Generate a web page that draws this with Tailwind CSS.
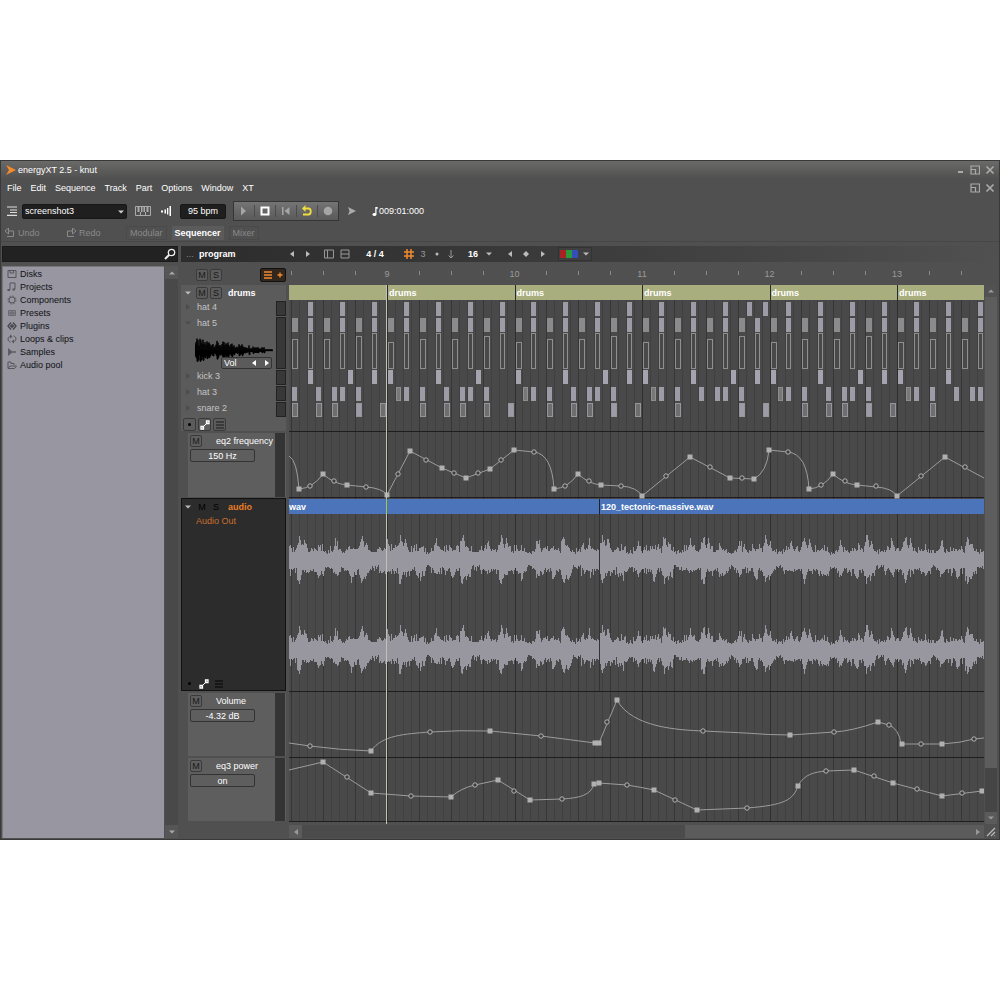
<!DOCTYPE html>
<html lang="en">
<head>
    <meta charset="UTF-8">
    <meta name="viewport" content="width=device-width, initial-scale=1.0">
    <title>energyXT 2.5 - knut</title>
    <script src="https://cdn.jsdelivr.net/npm/@tailwindcss/browser@4"></script>
</head>
<body class="bg-white min-h-screen flex items-center font-['Liberation_Sans',Arial,sans-serif] text-[9px] leading-3 text-white">
    <!-- Shared icons -->
    <svg class="hidden">
        <symbol id="left" viewBox="0 0 8 8"><path d="M6 1v6L2 4z" fill="currentColor"/></symbol>
        <symbol id="right" viewBox="0 0 8 8"><path d="M2 1v6l4-3z" fill="currentColor"/></symbol>
        <symbol id="down" viewBox="0 0 8 8"><path d="M1 2.500h6L4 5.500z" fill="currentColor"/></symbol>
        <symbol id="up" viewBox="0 0 8 8"><path d="M1 5.500h6L4 2.500z" fill="currentColor"/></symbol>
        <symbol id="close" viewBox="0 0 10 10"><path d="M1.500 1.500l7 7m0-7l-7 7" stroke="currentColor" stroke-width="1.700"/></symbol>
        <symbol id="restore" viewBox="0 0 10 10"><path d="M1 4V1h8.500v8H5M1 4.500h4.500V9H1z" fill="none" stroke="currentColor" stroke-width="1.200"/></symbol>
        <symbol id="nodes" viewBox="0 0 10 10"><path d="M2.500 7.500l5-5" stroke="currentColor"/><path d="M1 6.500h2.500V9H1zM6.500 1H9v2.500H6.500z" fill="none" stroke="currentColor" stroke-width="1.300"/></symbol>
        <symbol id="list" viewBox="0 0 10 10"><path d="M1 2h8M1 5h8M1 8h8" stroke="currentColor" stroke-width="1.200"/></symbol>
    </svg>

    <main class="w-full bg-[#505050] border border-[#393939]">
        <!-- Title bar -->
        <header class="h-[18px] flex items-center px-1 bg-gradient-to-b from-[#6a6a68] to-[#505050]">
            <svg class="w-3 h-3 text-[#f58a2c]" viewBox="0 0 12 12"><path d="M1 1l10 5-10 5 3-5z" fill="currentColor"/></svg>
            <h1 class="ml-px">energyXT 2.5 - knut</h1>
            <div class="ml-auto flex items-center gap-[5px] text-[#aaa]">
                <button aria-label="Minimize" class="w-[5px] h-[2px] mt-1 bg-[#aaa]"></button>
                <button aria-label="Restore" class="ml-[2px]"><svg class="w-[10px] h-[10px]"><use href="#restore"/></svg></button>
                <button aria-label="Close"><svg class="w-[10px] h-[10px]"><use href="#close"/></svg></button>
            </div>
        </header>

        <!-- Menu -->
        <nav class="h-[18px] flex items-center px-[6px] gap-[9px]">
            <button>File</button>
            <button>Edit</button>
            <button>Sequence</button>
            <button>Track</button>
            <button>Part</button>
            <button>Options</button>
            <button>Window</button>
            <button>XT</button>
            <div class="ml-auto -mr-[2px] flex items-center gap-[5px] text-[#aaa]">
                <button aria-label="Restore sequence"><svg class="w-[10px] h-[10px]"><use href="#restore"/></svg></button>
                <button aria-label="Close sequence"><svg class="w-[10px] h-[10px]"><use href="#close"/></svg></button>
            </div>
        </nav>

        <!-- Toolbar -->
        <div class="h-7 flex items-center px-[6px]">
            <button aria-label="Browser"><svg class="w-[10px] h-[10px] text-[#ddd]" viewBox="0 0 10 10"><path d="M0 1h10M3 4h7M3 6.500h7M0 9.300h10" stroke="currentColor" stroke-width="1.200"/></svg></button>
            <div class="relative ml-[5px]">
                <select aria-label="Sequence" class="appearance-none block w-[105px] h-[15px] pl-[2px] bg-[#1f1f1f] border border-[#171717] rounded-xs text-white">
                    <option>screenshot3</option>
                </select>
                <svg class="absolute right-[2px] top-1 w-2 h-2 text-[#ccc] pointer-events-none"><use href="#down"/></svg>
            </div>
            <button aria-label="Keyboard" class="ml-2"><svg class="w-4 h-3 text-[#aaa]" viewBox="0 0 16 12"><path d="M.5 1.500h15v9H.5zM5.500 7v4M10.500 7v4" fill="none" stroke="currentColor"/><path d="M2.500 2h2v5h-2zM6 2h1.500v5H6zM8.500 2H10v5H8.500zM11.500 2h2v5h-2z" fill="currentColor"/></svg></button>
            <button aria-label="Level" class="ml-[10px]"><svg class="w-[10px] h-[10px] text-white" viewBox="0 0 10 10"><path d="M0 4.500h2v2H0zM3.500 3.500h1.500v4H3.500zM6 2h1.300v6.500H6zM8.500 0h1.500v10H8.500z" fill="currentColor"/></svg></button>
            <input aria-label="Tempo" value="95 bpm" class="ml-[9px] w-[46px] h-[15px] bg-[#1f1f1f] border border-[#171717] rounded-xs text-center">
            <div class="ml-[7px] w-[106px] h-5 flex items-center border border-[#353535] bg-gradient-to-b from-[#747474] to-[#5a5a5a] text-[#a5a5a5] divide-x divide-[#4b4b4b]">
                <button aria-label="Play" class="flex-1 flex justify-center"><svg class="w-3 h-3" viewBox="0 0 12 12"><path d="M3 1.500l5 4.500-5 4.500z" fill="currentColor"/></svg></button>
                <button aria-label="Stop" class="flex-1 flex justify-center text-white"><svg class="w-3 h-3" viewBox="0 0 12 12"><path d="M2.500 2.500h7v7h-7z" fill="none" stroke="currentColor" stroke-width="2"/></svg></button>
                <button aria-label="Rewind" class="flex-1 flex justify-center"><svg class="w-3 h-3" viewBox="0 0 12 12"><path d="M2 2h1.500v8H2zM9.500 2v8L4.500 6z" fill="currentColor"/></svg></button>
                <button aria-label="Loop" class="flex-1 flex justify-center text-[#f0dc3c]"><svg class="w-3 h-3" viewBox="0 0 12 12"><path d="M4.500 0v7L1 3.500z" fill="currentColor"/><path d="M4 3.500h3.500c3 0 3 6 0 6H2" fill="none" stroke="currentColor" stroke-width="1.800"/></svg></button>
                <button aria-label="Record" class="flex-1 flex justify-center"><svg class="w-3 h-3" viewBox="0 0 12 12"><circle cx="6" cy="6" r="4.300" fill="currentColor"/></svg></button>
            </div>
            <button aria-label="Follow" class="ml-[9px]"><svg class="w-2 h-2 text-[#aaa]" viewBox="0 0 8 8"><path d="M0 0l8 4-8 4 1.500-4z" fill="currentColor"/></svg></button>
            <svg class="ml-4 w-[6px] h-[9px]" viewBox="0 0 6 9"><path d="M3.300 0h2.400v1.700H4.500V7.500a2 1.500 0 1 1-1.200-1.400z" fill="currentColor"/></svg>
            <output class="ml-px">009:01:000</output>
        </div>

        <!-- Undo and views -->
        <div class="h-[17px] flex items-center px-1 text-[#8a8a8a] border-b border-[#474747]">
            <button class="flex items-center gap-[3px] w-[61px]"><svg class="w-[10px] h-[10px]" viewBox="0 0 10 10"><path d="M3.500 0v6L0 3zM3 3h5.500v5.500H2" fill="none" stroke="currentColor"/></svg>Undo</button>
            <button class="flex items-center gap-[3px] w-[60px]"><svg class="w-[10px] h-[10px]" viewBox="0 0 10 10"><path d="M6.500 0v6L10 3zM7 3H1.500v5.500H8" fill="none" stroke="currentColor"/></svg>Redo</button>
            <button class="h-[14px] px-[3px] border border-[#4a4a4a]">Modular</button>
            <button class="h-[14px] ml-[5px] px-[3px] bg-[#5b5b5b] font-bold text-white">Sequencer</button>
            <button class="h-[14px] ml-[5px] px-[3px] border border-[#4a4a4a]">Mixer</button>
        </div>

        <div class="flex gap-[3px] pl-px pr-[2px] pt-1 pb-px">
            <!-- Browser -->
            <aside class="w-[176px] shrink-0 flex flex-col">
                <div class="h-4 flex items-center bg-[#222] border border-[#1b1b1b]">
                    <input aria-label="Search" class="flex-1 min-w-0 px-1 bg-transparent outline-none">
                    <svg class="w-3 h-3 mr-px text-[#eee]" viewBox="0 0 12 12"><circle cx="7.500" cy="4.500" r="3.200" fill="none" stroke="currentColor" stroke-width="1.300"/><path d="M5 7L1 11" stroke="currentColor" stroke-width="2"/></svg>
                </div>
                <div class="flex flex-1 mt-1">
                    <ul class="flex-1 bg-[#9796a1] border-t border-l border-[#777] pl-1 text-[#101014]">
                        <li class="h-[13px] flex items-center gap-[3px]"><svg class="w-[10px] h-[10px]" viewBox="0 0 10 10"><path d="M1 1.500h8v7H1zM3 1.500v2.500h3.500V1.500" fill="none" stroke="#55555c"/></svg>Disks</li>
                        <li class="h-[13px] flex items-center gap-[3px]"><svg class="w-[10px] h-[10px]" viewBox="0 0 10 10"><path d="M3 7.500V1h5v6" fill="none" stroke="#55555c"/><path d="M.5 7h2.500v2H.5zM5.500 6.500H8v2H5.500z" fill="#55555c"/></svg>Projects</li>
                        <li class="h-[13px] flex items-center gap-[3px]"><svg class="w-[10px] h-[10px]" viewBox="0 0 10 10"><circle cx="5" cy="5" r="3" fill="none" stroke="#55555c"/><circle cx="5" cy="5" r="4" fill="none" stroke="#55555c" stroke-dasharray="1.500 1.640"/></svg>Components</li>
                        <li class="h-[13px] flex items-center gap-[3px]"><svg class="w-[10px] h-[10px]" viewBox="0 0 10 10"><path d="M1.500 2.500h7v5h-7zM1.500 4.200h7M1.500 5.800h7M4 2.500v5M6 2.500v5" fill="none" stroke="#6a6a72"/></svg>Presets</li>
                        <li class="h-[13px] flex items-center gap-[3px]"><svg class="w-[10px] h-[10px]" viewBox="0 0 10 10"><path d="M4 1.500L1 5l3 3.500M6 1.500L9 5 6 8.500M3 5h4M5 3v4" fill="none" stroke="#44444a" stroke-width="1.300"/></svg>Plugins</li>
                        <li class="h-[13px] flex items-center gap-[3px]"><svg class="w-[10px] h-[10px]" viewBox="0 0 10 10"><path d="M3.500 8C0 7.500.5 2.500 3.500 2.500M6.500 2c3.500.5 3 5.500 0 5.500" fill="none" stroke="#55555c"/><path d="M3 .5L5.500 2.500 3 4.500zM7 5.500L4.500 7.500 7 9.500z" fill="#55555c"/></svg>Loops &amp; clips</li>
                        <li class="h-[13px] flex items-center gap-[3px]"><svg class="w-[10px] h-[10px]" viewBox="0 0 10 10"><path d="M1 1l4 3.300h4v1.400H5L1 9z" fill="#5c5c64"/></svg>Samples</li>
                        <li class="h-[13px] flex items-center gap-[3px]"><svg class="w-[10px] h-[10px]" viewBox="0 0 10 10"><path d="M1 8V2h3v1.500h3V5M1 8.500h6.500L9.500 6H3z" fill="none" stroke="#55555c"/></svg>Audio pool</li>
                    </ul>
                    <div class="w-[13px] ml-px bg-[#494949] flex flex-col justify-between text-[#aaa]">
                        <button aria-label="Scroll up" class="h-[13px] flex items-center justify-center bg-[#565656]"><svg class="w-2 h-2"><use href="#up"/></svg></button>
                        <button aria-label="Scroll down" class="h-[13px] flex items-center justify-center bg-[#565656]"><svg class="w-2 h-2"><use href="#down"/></svg></button>
                    </div>
                </div>
            </aside>

            <section class="flex-1 min-w-0 flex flex-col">
                <!-- Sequencer options -->
                <div class="h-4 mb-[2px] flex items-center bg-gradient-to-r from-[#2c2c2c] via-[#3c3c3c] to-[#505050] text-[#bbb] overflow-hidden">
                    <button class="w-[18px] text-[#888]">...</button>
                    <button class="w-[85px] text-left text-white font-bold">program</button>
                    <button aria-label="Previous pattern" class="w-4 flex justify-center"><svg class="w-2 h-2"><use href="#left"/></svg></button>
                    <button aria-label="Next pattern" class="w-4 flex justify-center"><svg class="w-2 h-2"><use href="#right"/></svg></button>
                    <button aria-label="Split left" class="w-4 ml-[5px] flex justify-center"><svg class="w-[10px] h-[10px] text-[#999]" viewBox="0 0 10 10"><path d="M.5 1h9v8h-9zM3.500 1v8" fill="none" stroke="currentColor"/></svg></button>
                    <button aria-label="Split top" class="w-4 flex justify-center"><svg class="w-[10px] h-[10px] text-[#999]" viewBox="0 0 10 10"><path d="M1 1h8v8H1zM1 5h8" fill="none" stroke="currentColor"/></svg></button>
                    <button class="w-12 -ml-[2px] mr-[2px] text-white font-bold">4 / 4</button>
                    <button aria-label="Grid" class="w-4 flex justify-center"><svg class="w-[10px] h-[10px] text-[#f08a30]" viewBox="0 0 10 10"><path d="M3 0v10M7 0v10M0 3h10M0 7h10" stroke="currentColor" stroke-width="1.500"/></svg></button>
                    <button class="w-3 text-[#999]">3</button>
                    <button aria-label="Dotted" class="w-4 flex justify-center"><svg class="w-1 h-1" viewBox="0 0 4 4"><circle cx="2" cy="2" r="1.500" fill="currentColor"/></svg></button>
                    <button aria-label="Snap" class="w-3 flex justify-center"><svg class="w-2 h-[10px] text-[#999]" viewBox="0 0 8 10"><path d="M4 1v8M1.500 6.500L4 9l2.500-2.500" fill="none" stroke="currentColor"/></svg></button>
                    <button class="w-6 ml-1 text-white font-bold">16</button>
                    <button aria-label="Grid size" class="w-2"><svg class="w-2 h-2"><use href="#down"/></svg></button>
                    <button aria-label="Previous marker" class="w-4 ml-[9px] flex justify-center"><svg class="w-2 h-2"><use href="#left"/></svg></button>
                    <button aria-label="Marker" class="w-4 flex justify-center"><svg class="w-2 h-2" viewBox="0 0 8 8"><path d="M4 1l3 3-3 3-3-3z" fill="currentColor"/></svg></button>
                    <button aria-label="Next marker" class="w-4 ml-px flex justify-center"><svg class="w-2 h-2"><use href="#right"/></svg></button>
                    <button aria-label="Colours" class="ml-[7px] w-[34px] h-[14px] px-px flex items-center border border-[#333] bg-[#3f3f3f]">
                        <span class="w-[6px] h-2 bg-[#a82222]"></span><span class="w-[6px] h-2 bg-[#2a9a3a]"></span><span class="w-[6px] h-2 bg-[#3350b8]"></span>
                        <svg class="w-2 h-2 ml-1"><use href="#down"/></svg>
                    </button>
                </div>

                <div class="flex flex-1">
                    <!-- Track headers -->
                    <div class="w-[105px] shrink-0 flex flex-col">
                        <div class="h-[21px] flex items-center pl-[15px] gap-[2px] text-[#1a1a1a]">
                            <button class="w-3 h-3 leading-[10px] border border-[#3a3a3a] rounded-xs bg-[#5c5c5c]">M</button>
                            <button class="w-3 h-3 leading-[10px] border border-[#3a3a3a] rounded-xs bg-[#5c5c5c]">S</button>
                            <button aria-label="Add track" class="ml-auto w-[26px] h-[14px] flex items-center justify-around border border-[#111] rounded-xs bg-[#33261c] text-[#f08a30]">
                                <svg class="w-2 h-2" viewBox="0 0 8 8"><path d="M0 1h8M0 4h8M0 7h8" stroke="currentColor" stroke-width="1.300"/></svg>
                                <svg class="w-[6px] h-[6px]" viewBox="0 0 6 6"><path d="M3 .5v5M.5 3h5" stroke="currentColor" stroke-width="1.400"/></svg>
                            </button>
                        </div>

                        <div class="h-[146px] bg-[#5b5b5b] text-[#c4c4c4]">
                            <div class="h-4 flex items-center pl-[3px] gap-[2px]">
                                <svg class="w-2 h-2 mr-[2px] text-[#bbb]"><use href="#down"/></svg>
                                <button class="w-3 h-3 leading-[10px] border border-[#3a3a3a] rounded-xs text-[#1a1a1a]">M</button>
                                <button class="w-3 h-3 leading-[10px] border border-[#3a3a3a] rounded-xs text-[#1a1a1a]">S</button>
                                <span class="ml-1 font-bold text-white">drums</span>
                            </div>
                            <div class="h-4 flex items-start pl-[3px]"><svg class="w-2 h-3 mr-[5px] text-[#4c4c4c]"><use href="#right"/></svg><span class="flex-1">hat 4</span><span class="w-[10px] h-[15px] border border-[#222] bg-[#383838]"></span></div>
                            <div class="h-[53px] flex">
                                <div class="flex-1">
                                    <div class="h-3 flex items-center pl-[3px]"><svg class="w-2 h-2 mr-[5px] text-[#4c4c4c]"><use href="#down"/></svg>hat 5</div>
                                    <svg id="sampleWave" class="ml-[14px] mt-2 w-[78px] h-[26px]" viewBox="0 0 78 26"></svg>
                                    <div class="relative -mt-[6px] ml-10 w-[51px] h-3 flex items-center pl-[2px] border border-[#333] rounded-xs bg-[#5b5b5b] text-white">
                                        <span class="flex-1">Vol</span>
                                        <button aria-label="Previous parameter"><svg class="w-2 h-2 mr-[5px]"><use href="#left"/></svg></button>
                                        <button aria-label="Next parameter"><svg class="w-2 h-2"><use href="#right"/></svg></button>
                                    </div>
                                </div>
                                <span class="w-[10px] mb-px border border-[#222] bg-[#383838]"></span>
                            </div>
                            <div class="h-4 flex items-start pl-[3px]"><svg class="w-2 h-3 mr-[5px] text-[#4c4c4c]"><use href="#right"/></svg><span class="flex-1">kick 3</span><span class="w-[10px] h-[15px] border border-[#222] bg-[#383838]"></span></div>
                            <div class="h-4 flex items-start pl-[3px]"><svg class="w-2 h-3 mr-[5px] text-[#4c4c4c]"><use href="#right"/></svg><span class="flex-1">hat 3</span><span class="w-[10px] h-[15px] border border-[#222] bg-[#383838]"></span></div>
                            <div class="h-4 flex items-start pl-[3px]"><svg class="w-2 h-3 mr-[5px] text-[#4c4c4c]"><use href="#right"/></svg><span class="flex-1">snare 2</span><span class="w-[10px] h-[15px] border border-[#222] bg-[#383838]"></span></div>
                            <div class="h-[13px] flex items-center pl-[2px] gap-[2px] text-[#1a1a1a]">
                                <button aria-label="Drums options" class="w-[13px] h-[13px] flex items-center justify-center border border-[#3a3a3a] rounded-xs"><svg class="w-[3px] h-[3px]" viewBox="0 0 3 3"><circle cx="1.500" cy="1.500" r="1.500"/></svg></button>
                                <button aria-label="Drums automation" class="w-[13px] h-[13px] flex items-center justify-center border border-[#3a3a3a] rounded-xs text-white"><svg class="w-[10px] h-[10px]"><use href="#nodes"/></svg></button>
                                <button aria-label="Drums lanes" class="w-[13px] h-[13px] flex items-center justify-center border border-[#3a3a3a] rounded-xs"><svg class="w-[10px] h-[10px]"><use href="#list"/></svg></button>
                            </div>
                        </div>

                        <div class="mt-[2px] ml-[7px] h-16 flex bg-[#5e5e5e]">
                            <div class="flex-1 pt-[2px] pl-[2px]">
                                <div class="flex items-center whitespace-nowrap"><button class="w-3 h-3 mr-[14px] shrink-0 leading-[10px] border border-[#3a3a3a] rounded-xs text-[#1a1a1a]">M</button><label for="eq2">eq2 frequency</label></div>
                                <input id="eq2" value="150 Hz" class="block mt-[2px] w-[65px] h-[13px] border border-[#333] rounded-xs text-center">
                            </div>
                            <span class="w-[10px] mr-px bg-[#343434]"></span>
                        </div>

                        <div class="mt-px h-[193px] flex flex-col bg-[#2c2c2c] border border-[#111] text-[#e87d28]">
                            <div class="h-[15px] flex items-center pl-[2px] gap-[2px]">
                                <svg class="w-2 h-2 mr-[2px] text-[#bbb]"><use href="#down"/></svg>
                                <button class="w-3 text-black">M</button>
                                <button class="w-3 text-black">S</button>
                                <span class="ml-1 font-bold">audio</span>
                            </div>
                            <a href="#" class="mt-px ml-[14px] text-[#c8702c]">Audio Out</a>
                            <div class="mt-auto h-[13px] flex items-center pl-[6px] gap-[8px] text-black">
                                <svg class="w-[3px] h-[3px]" viewBox="0 0 3 3"><circle cx="1.500" cy="1.500" r="1.500"/></svg>
                                <button aria-label="Audio automation" class="text-white"><svg class="w-[10px] h-[10px]"><use href="#nodes"/></svg></button>
                                <button aria-label="Audio lanes" class="-ml-[3px]"><svg class="w-[10px] h-[10px]"><use href="#list"/></svg></button>
                            </div>
                        </div>

                        <div class="mt-[2px] ml-[7px] h-[63px] flex bg-[#5e5e5e]">
                            <div class="flex-1 pt-[2px] pl-[2px]">
                                <div class="flex items-center"><button class="w-3 h-3 mr-[14px] leading-[10px] border border-[#3a3a3a] rounded-xs text-[#1a1a1a]">M</button><label for="volume">Volume</label></div>
                                <input id="volume" value="-4.32 dB" class="block mt-[2px] w-[65px] h-[13px] border border-[#333] rounded-xs text-center">
                            </div>
                            <span class="w-[10px] mr-px bg-[#343434]"></span>
                        </div>

                        <div class="mt-[2px] ml-[7px] h-[63px] flex bg-[#5e5e5e]">
                            <div class="flex-1 pt-[2px] pl-[2px]">
                                <div class="flex items-center"><button class="w-3 h-3 mr-[14px] leading-[10px] border border-[#3a3a3a] rounded-xs text-[#1a1a1a]">M</button><label for="eq3">eq3 power</label></div>
                                <input id="eq3" value="on" class="block mt-[2px] w-[65px] h-[13px] border border-[#333] rounded-xs text-center">
                            </div>
                            <span class="w-[10px] mr-px bg-[#343434]"></span>
                        </div>
                    </div>

                    <!-- Timeline -->
                    <div class="flex-1 min-w-0 ml-[3px] flex flex-col">
                        <svg id="timeline" class="w-full h-[560px]"></svg>
                        <div class="h-[13px] mt-px flex bg-[#4b4b4b] text-[#999]">
                            <button aria-label="Scroll left" class="w-[13px] flex items-center justify-center bg-[#5b5b5b]"><svg class="w-2 h-2"><use href="#left"/></svg></button>
                            <div class="flex-1"></div>
                            <div class="w-[43%] flex items-center justify-end bg-[#5b5b5b]"><button aria-label="Scroll right"><svg class="w-2 h-2 mr-[2px]"><use href="#right"/></svg></button></div>
                        </div>
                    </div>

                    <div class="w-3 ml-px mt-[21px] flex flex-col text-[#999]">
                        <button aria-label="Scroll tracks up" class="h-3 flex items-center justify-center bg-[#525252]"><svg class="w-2 h-2"><use href="#up"/></svg></button>
                        <div class="h-[471px] bg-[#5d5d5d]"></div>
                        <div class="flex-1 bg-[#454545]"></div>
                        <button aria-label="Scroll tracks down" class="h-3 flex items-center justify-center bg-[#5b5b5b]"><svg class="w-2 h-2"><use href="#down"/></svg></button>
                        <svg class="w-3 h-[14px] text-[#bbb]" viewBox="0 0 12 14"><path d="M2 12l8-8M6 12l4-4M9.500 12l.5-.5" stroke="currentColor" stroke-width="1.200"/></svg>
                    </div>
                </div>
            </section>
        </div>
    </main>

    <script>
        const NS = 'http://www.w3.org/2000/svg';
        const svg = document.getElementById('timeline');
        const LEFT = 289, TOP = 264, BAR = 127.5, FIRST = 259.5;

        function noise(n) {
            const v = Math.sin(n * 12.9898) * 43758.5453;
            return v - Math.floor(v);
        }

        function draw(WIDTH) {
            const RIGHT = LEFT + WIDTH;
            const root = document.createElementNS(NS, 'g');
            root.setAttribute('transform', `translate(${-LEFT} ${-TOP})`);
            svg.replaceChildren(root);

            function add(tag, attrs, text) {
                const el = document.createElementNS(NS, tag);
                for (const key in attrs) el.setAttribute(key, attrs[key]);
                if (text) el.textContent = text;
                root.appendChild(el);
            }
            function rect(x, y, width, height, fill, stroke) {
                if (x + width <= LEFT || x >= RIGHT) return;
                add('rect', { x, y, width, height, fill, stroke: stroke || 'none' });
            }

            // Grid: sixteenths, beats and bars
            rect(LEFT, 300, WIDTH, 522, '#494949');
            for (let i = 0; FIRST + i * BAR / 16 < RIGHT; i++) {
                const x = Math.round(FIRST + i * BAR / 16);
                const beat = i % 4 === 0;
                rect(x, 300, 1, 522, i % 16 === 0 ? '#2f2f2f' : beat ? '#363636' : '#404040');
                if (beat && i % 16) rect(x, 271, 1, 4, '#8a8a8a');
            }
            for (let b = 1; FIRST + b * BAR + 8 < RIGHT; b++) {
                add('text', { x: FIRST + b * BAR, y: 277, fill: '#9a9a9a', 'font-size': 9, 'text-anchor': 'middle' }, String(b + 8));
            }

            // Drum clips and notes
            const kick = [0, 6, 11, 14], hat3 = [1, 2, 4, 7, 9, 10, 12], snare = [4, 7, 9, 12, 15];
            const velocity = [342, 333, 339, 333, 339, 333, 336, 333];
            rect(LEFT, 285, WIDTH, 15, '#a9ae7e');
            for (let b = 0; FIRST + b * BAR < RIGHT; b++) {
                const x0 = FIRST + b * BAR;
                const at = i => Math.round(x0 + i * BAR / 16) + 1;
                if (b) {
                    rect(Math.round(x0), 285, 1, 15, '#2b2b2b');
                    if (x0 + 30 < RIGHT) add('text', { x: x0 + 2, y: 296, fill: '#fff', 'font-size': 9, 'font-weight': 'bold' }, 'drums');
                }
                (b === 3 ? [2, 6, 10, 13, 15] : [2, 6, 10, 14]).forEach(i => rect(at(i), 302, 5, 14, '#9d9ba6'));
                velocity.forEach((top, n) => {
                    const wide = n % 2 === 0;
                    rect(at(n * 2), 318, wide ? 6 : 5, 14, wide ? '#8b8b8e' : '#9d9ba6');
                    rect(at(n * 2) + .5, top + .5, wide ? 5 : 4, 369 - top - 1, 'none', '#8f8f8f');
                });
                (b === 1 ? [0, 6, 11] : kick).forEach(i => rect(at(i), 370, 5, 14, '#a5a3ae'));
                hat3.forEach(i => i < 2 ? rect(at(i) + .5, 387.5, 4, 13, '#787878', '#8f8f8f') : rect(at(i), 387, 5, 14, '#9d9ba6'));
                (b === 3 ? [4, 12, 15] : b === 5 ? [4] : snare).forEach(i => {
                    const solid = (b === 3 && i > 4) || (b !== 1 && i === 12) || (b === 1 && i === 15);
                    rect(at(i) + .5, 403.5, 5, 13, solid ? '#9d9ba6' : '#6e6e6e', '#96959c');
                });
            }

            // Audio clips
            rect(LEFT, 499, WIDTH, 15, '#4b74bb');
            rect(599, 499, 1, 15, '#222');
            add('text', { x: 289, y: 510, fill: '#fff', 'font-size': 9, 'font-weight': 'bold' }, 'wav');
            add('text', { x: 601, y: 510, fill: '#fff', 'font-size': 9, 'font-weight': 'bold' }, '120_tectonic-massive.wav');

            // The loop repeats every 101 px; hits are [offset, up, down, width]
            const hits = [[0, 14, 12, 2], [4, 5, 8, 3], [26, 10, 3, 2], [39, 12, 14, 2], [44, 10, 3, 2], [59, 2, 7, 3], [75, 9, 5, 2], [91, 1, 9, 2]];
            function wave(center) {
                let d = '';
                for (let x = LEFT; x < RIGHT; x++) {
                    const p = ((x - 361) % 101 + 101) % 101;
                    const swell = (p > 9 && p < 18) || (p > 64 && p < 70) ? .7 : 1;
                    let up = (6 + noise(p) * 4 + noise(x + 50) ** 3 * 7) * swell;
                    let down = (8 + noise(p + 200) * 4 + noise(x + 90) ** 3 * 7) * swell;
                    hits.forEach(([o, u, v, w]) => {
                        const k = Math.max(0, 1 - Math.min(Math.abs(p - o), 101 - Math.abs(p - o)) / (w + 1));
                        up += u * k;
                        down += v * k;
                    });
                    d += `M${x} ${Math.round(center - Math.min(up, 24))}h1V${Math.round(center + Math.min(down, 25))}h-1z`;
                }
                add('path', { d, fill: '#98969f' });
            }
            wave(559);
            wave(649);
            rect(599, 514, 1, 177, '#333');

            // Lane borders
            [431, 497, 691, 757, 821].forEach(y => rect(LEFT, y, WIDTH, 1, '#1e1e1e'));

            // Automation: squares are points, circles are curve handles
            function automation(d, squares, circles) {
                add('path', { d, fill: 'none', stroke: '#9c9c9c' });
                squares.forEach(([x, y]) => rect(x - 2.5, y - 2.5, 5, 5, '#b0b0b0'));
                circles.forEach(([x, y]) => add('circle', { cx: x, cy: y, r: 2.2, fill: '#3c3c3c', stroke: '#b4b4b4' }));
            }
            automation(
                'M289 456Q297 460 299 489Q313 488 323 474Q334 484 347 485L366 487Q382 488 387 495L410 451L442 468L466 478L490 469L514 450L534 452Q552 454 554 489Q568 488 578 474Q589 484 601 485L621 486Q637 487 642 496L690 457L730 478L754 479Q767 472 769 450L788 452Q807 454 809 489Q823 488 833 474Q844 484 857 485L876 487Q892 488 897 496L945 457L984 478',
                [[299, 489], [323, 474], [347, 485], [387, 495], [410, 451], [442, 468], [466, 478], [490, 469], [514, 450], [554, 489], [578, 474], [601, 485], [642, 496], [690, 457], [730, 478], [754, 479], [769, 450], [809, 489], [833, 474], [857, 485], [897, 496], [945, 457]],
                [[310, 486], [334, 481], [366, 487], [398, 474], [426, 460], [454, 473], [478, 473], [501, 460], [534, 452], [565, 486], [589, 481], [621, 486], [666, 476], [710, 467], [742, 478], [788, 452], [821, 485], [845, 481], [876, 486], [921, 476], [965, 467]]
            );
            automation(
                'M289 743L310 746Q340 750 371 751C382 735 405 734 430 732Q460 730 490 731L541 736L595 743L599 743L617 700C632 728 680 730 703 731L745 733Q770 735 790 735L834 732Q852 731 878 722L889 725Q899 729 901 744L942 744Q960 743 974 739L984 738',
                [[371, 751], [490, 731], [595, 743], [599, 743], [617, 700], [790, 735], [878, 722], [902, 744], [942, 744]],
                [[310, 746], [430, 732], [541, 736], [607, 722], [703, 731], [834, 732], [889, 725], [921, 744], [974, 739]]
            );
            automation(
                'M289 770L323 762L371 793L411 796L451 797Q461 788 475 785L498 780L530 800L562 799C580 798 591 795 594 784L599 783L627 785Q640 787 654 790L697 810L747 808C785 805 793 800 798 786C804 774 815 772 826 771L854 770L893 783L942 796L982 791',
                [[323, 762], [371, 793], [451, 797], [498, 780], [530, 800], [594, 784], [599, 783], [654, 790], [697, 810], [798, 786], [854, 770], [893, 783], [942, 796], [982, 791]],
                [[347, 777], [411, 796], [475, 785], [514, 791], [562, 799], [627, 785], [675, 800], [747, 808], [826, 771], [874, 776], [917, 789], [962, 793]]
            );

            // Playhead
            rect(386, 285, 1, 539, '#c4c2b4');
            rect(386, 499, 1, 15, '#a8c83c');
        }
        draw(695);
        new ResizeObserver(entries => draw(Math.ceil(entries[0].contentRect.width))).observe(svg);

        // Sample preview
        let d = 'M0 13';
        for (let x = 0; x <= 78; x++) {
            const h = x > 70 ? .7 : (3 + noise(x + 7) * 9) * (1 - x / 100);
            d += `V${(13 - h).toFixed(1)}V${(13 + h).toFixed(1)}H${x}`;
        }
        const preview = document.createElementNS(NS, 'path');
        preview.setAttribute('d', d);
        preview.setAttribute('stroke', '#000');
        document.getElementById('sampleWave').appendChild(preview);
    </script>
</body>
</html>
